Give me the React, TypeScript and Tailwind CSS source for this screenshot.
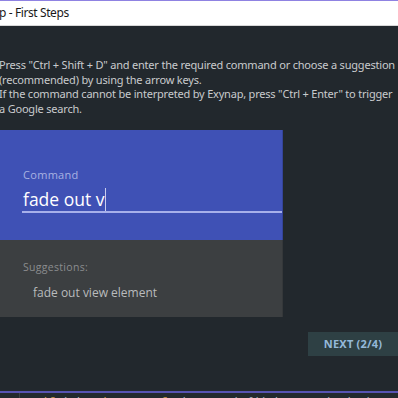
import React from "react";

export default function App() {
  return (
    <div className="w-[398px] h-[398px] overflow-hidden bg-[#22282d] flex flex-col relative" style={{ fontFamily: '"Noto Sans", "Open Sans", sans-serif' }}>
      <div className="h-px bg-[#8f82e2]" />
      <div className="h-[24px] bg-white flex items-center text-[12px] text-[#1a1a1a] -ml-px tracking-[-0.4px]">p - First Steps</div>
      <div className="h-px bg-[#d8d8d8]" />
      <div className="pt-[32px] text-[11px] leading-[14.5px] text-[#c9cbcd] -ml-px tracking-[-0.2px] whitespace-nowrap">
        <p>Press "Ctrl + Shift + D" and enter the required command or choose a suggestion</p>
        <p>(recommended) by using the arrow keys.</p>
        <p>If the command cannot be interpreted by Exynap, press "Ctrl + Enter" to trigger</p>
        <p>a Google search.</p>
      </div>
      <div className="mt-[14px] w-[283px] flex flex-col">
        <div className="h-[110px] bg-[#3f51b5] border-r border-[#34449a] pl-[23px] pt-[38px]" style={{ fontFamily: '"Open Sans", sans-serif' }}>
          <div className="text-[11px] leading-[14px] text-[#a9b1e2] tracking-[0.3px]">Command</div>
          <div className="mt-[5px] h-[24px] flex items-end text-[17.5px] leading-[24px] text-white">
            <span>fade out v</span>
            <span className="w-px h-[23px] bg-[#c8cdee] ml-[1px]" />
          </div>
          <div className="h-[2px] bg-[#a7b0ea] -ml-px" />
        </div>
        <div className="h-[77px] bg-[#3c3f41] border-r border-[#35383a] pl-[23px] pt-[20px]" style={{ fontFamily: '"Open Sans", sans-serif' }}>
          <div className="text-[10.5px] leading-[14px] text-[#8b8d8f] tracking-[0.3px]">Suggestions:</div>
          <div className="mt-[10px] pl-[10px] text-[12px] leading-[18px] text-[#b9bbbd]">fade out view element</div>
        </div>
      </div>
      <div className="mt-[15px] flex justify-end">
        <div className="w-[90px] h-[24px] bg-[#2e4044] flex items-center justify-center text-[11px] font-bold text-[#94b8d8] tracking-[0.2px]">NEXT (2/4)</div>
      </div>
      <div className="flex-1" />
      <div className="h-[2px] bg-[#5753b3]" />
      <div className="h-[5px] relative overflow-hidden bg-[#23292e]">
        <div className="absolute left-[19px] top-0 w-px h-[5px] bg-[#3a4045]" />
        <div className="absolute left-[42px] top-[3px] whitespace-nowrap text-[11px] leading-[12px]" style={{ fontFamily: '"Liberation Mono", monospace' }}>
          <span className="text-[#cc9a4a]">if</span><span className="text-[#a9b7c6]"> (view </span><span className="text-[#cc9a4a]">instanceof</span><span className="text-[#a9b7c6]"> ViewGroup) </span><span className="text-[#a9b7c6]">{"{"}((ViewGroup) view).</span><span className="text-[#9876aa]">getChildAt</span><span className="text-[#a9b7c6]">(i)</span><span className="text-[#5fa0c0]">);</span>
        </div>
      </div>
    </div>
  );
}
